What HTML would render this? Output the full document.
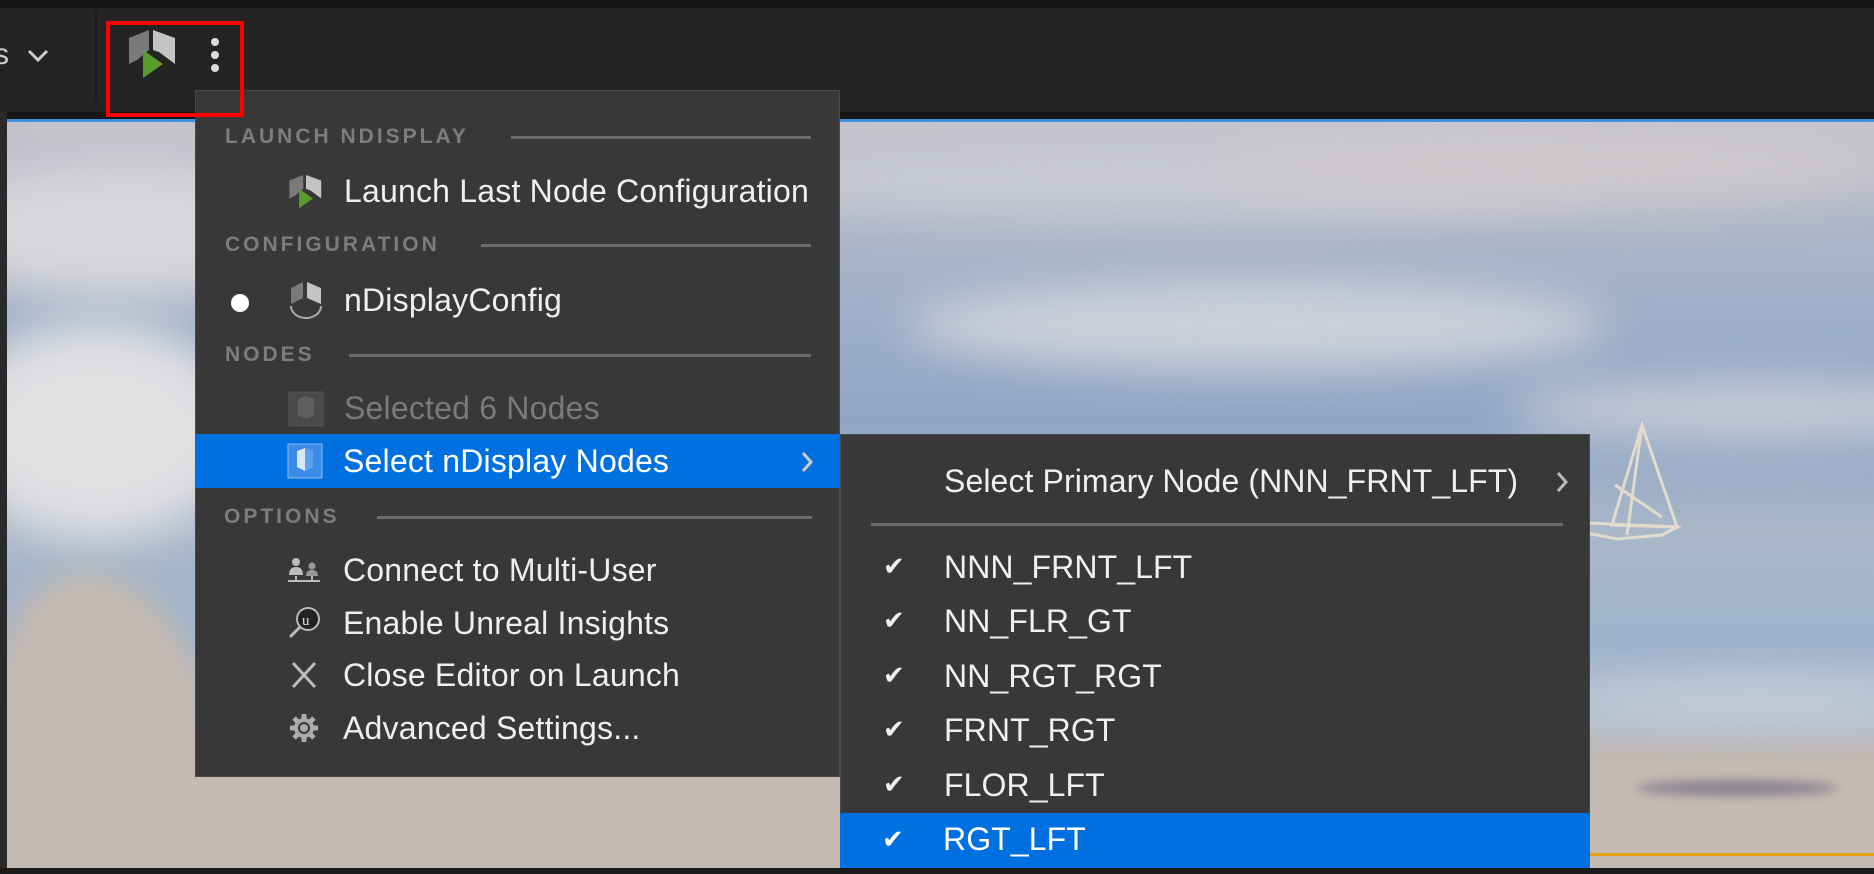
<!DOCTYPE html>
<html><head><meta charset="utf-8"><style>
*{margin:0;padding:0;box-sizing:border-box}
html,body{width:1874px;height:874px;overflow:hidden}
body{position:relative;background:#242424;font-family:"Liberation Sans",sans-serif}
.abs{position:absolute}
#top{left:0;top:0;width:1874px;height:8px;background:#151515}
#bar{left:0;top:8px;width:1874px;height:104px;background:#242424}
#strip{left:0;top:112px;width:1874px;height:8px;background:#161616}
#vp{left:7px;top:120px;width:1867px;height:748px;overflow:hidden;
background:linear-gradient(180deg,#c6c4ca 0%,#b3b8c8 10%,#9fb0c8 25%,#8ea6c4 40%,#a9b7c9 55%,#9db3cb 70%,#b0bccb 80%,#c0b8b2 85%,#c3b7ae 100%)}
#vp .cl{position:absolute;border-radius:50%;filter:blur(22px)}
#blueline{left:7px;top:119px;width:1867px;height:3px;background:#3d8fe0}
#bottom{left:0;top:868px;width:1874px;height:6px;background:#1a1a1a}
#leftstrip{left:0;top:112px;width:7px;height:762px;background:#2a2a2a}
.menu{background:#383838;border:1px solid #4a4a4a}
.hdr{position:absolute;left:29px;font-size:21px;letter-spacing:3px;color:#7d7d7d;font-weight:bold;line-height:24px}
.hline{position:absolute;height:3px;background:#6a6a6a}
.it{position:absolute;left:148px;font-size:32px;color:#efefef;line-height:36px;letter-spacing:0.2px;white-space:nowrap}
.hl{position:absolute;background:#0070e0}
.ic{position:absolute}
.sit{position:absolute;left:103px;font-size:32px;color:#f0f0f0;line-height:36px;white-space:nowrap;letter-spacing:0.1px}
.chk{position:absolute;left:42px;font-size:26px;color:#eee}
</style></head><body>
<div id="top" class="abs"></div>
<div id="bar" class="abs"></div>
<div id="strip" class="abs"></div>
<div id="vp" class="abs">
 <div class="cl" style="left:-80px;top:40px;width:400px;height:140px;background:#d8d6da"></div>
 <div class="cl" style="left:-60px;top:200px;width:300px;height:220px;background:#e0dfe2"></div>
 <div class="cl" style="left:700px;top:20px;width:900px;height:80px;background:#c8c9d3"></div>
 <div class="cl" style="left:900px;top:160px;width:700px;height:90px;background:#cdd0da"></div>
 <div class="cl" style="left:1200px;top:0px;width:700px;height:90px;background:#ccc8cc"></div>
 <div class="cl" style="left:1500px;top:260px;width:500px;height:60px;background:#c7cbd6"></div>
 <div class="cl" style="left:1550px;top:560px;width:400px;height:40px;background:#c9d1dc"></div>
 <div style="position:absolute;left:-20px;top:450px;width:240px;height:400px;background:#c3b9b2;border-radius:40% 60% 0 0;filter:blur(14px)"></div>
 <div style="position:absolute;left:0;top:640px;width:1900px;height:140px;background:#c4bab2;filter:blur(3px)"></div>
 <div style="position:absolute;left:1630px;top:660px;width:200px;height:16px;background:#8a8590;border-radius:50%;filter:blur(5px)"></div>
 <div style="position:absolute;left:1583px;top:733px;width:300px;height:3px;background:#e8a010"></div>
 <svg style="position:absolute;left:1580px;top:285px" width="130" height="160" viewBox="0 0 130 160"><g stroke="#e2dccd" stroke-width="3" fill="none"><path d="M55 20 L25 120 L90 122 Z"/><path d="M55 20 L40 130"/><path d="M0 118 L90 122 L75 130 L30 134 L0 128"/><path d="M28 80 L75 112"/></g></svg>
</div>
<div id="blueline" class="abs"></div>
<div id="leftstrip" class="abs"></div>
<div id="bottom" class="abs"></div>

<!-- toolbar -->
<div class="abs" style="left:-6px;top:38px;font-size:30px;color:#ccc">s</div>
<svg class="abs" style="left:26px;top:48px" width="24" height="16"><path d="M3 3 L12 12 L21 3" stroke="#ccc" stroke-width="3" fill="none"/></svg>
<div class="abs" style="left:95px;top:10px;width:2px;height:92px;background:#1a1a1a"></div>
<svg class="abs" style="left:127px;top:30px" width="52" height="52" viewBox="0 0 52 52"><path d="M2 8 L22 0 L22 20 L10 30 L2 34 Z" fill="#7a7a7a"/><path d="M26 0 L48 8 L48 34 L32 22 L26 20 Z" fill="#c4c4c4"/><path d="M16 20 L36 34 L16 48 Z" fill="#5a9c2c"/></svg>
<div class="abs" style="left:211px;top:38px;width:8px;height:8px;border-radius:50%;background:#ddd"></div>
<div class="abs" style="left:211px;top:51px;width:8px;height:8px;border-radius:50%;background:#ddd"></div>
<div class="abs" style="left:211px;top:64px;width:8px;height:8px;border-radius:50%;background:#ddd"></div>

<!-- main menu -->
<div class="abs menu" style="left:195px;top:90px;width:645px;height:687px">
 <div class="hdr" style="top:34px">LAUNCH NDISPLAY</div><div class="hline" style="left:315px;right:28px;top:45px"></div>
 <svg class="ic" style="left:92px;top:84px" width="36" height="36" viewBox="0 0 52 52"><path d="M2 8 L22 0 L22 20 L10 30 L2 34 Z" fill="#7a7a7a"/><path d="M26 0 L48 8 L48 34 L32 22 L26 20 Z" fill="#c4c4c4"/><path d="M16 20 L36 34 L16 48 Z" fill="#5a9c2c"/></svg>
 <div class="it" style="top:82px">Launch Last Node Configuration</div>
 <div class="hdr" style="top:142px">CONFIGURATION</div><div class="hline" style="left:285px;right:28px;top:153px"></div>
 <div class="ic" style="left:35px;top:203px;width:18px;height:18px;border-radius:50%;background:#fff"></div>
 <svg class="ic" style="left:92px;top:191px" width="36" height="38" viewBox="0 0 36 38"><path d="M3 6 L15 0 L15 16 L3 22 Z" fill="#7a7a7a"/><path d="M19 0 L33 6 L33 22 L19 16 Z" fill="#c4c4c4"/><path d="M3 24 A15 12 0 0 0 33 24" stroke="#aaa" stroke-width="2" fill="none"/></svg>
 <div class="it" style="top:191px">nDisplayConfig</div>
 <div class="hdr" style="top:252px">NODES</div><div class="hline" style="left:153px;right:28px;top:263px"></div>
 <svg class="ic" style="left:92px;top:300px" width="36" height="36"><rect x="1" y="1" width="34" height="34" fill="#4a4a4a" stroke="#555"/><path d="M10 8 L18 5 L26 8 L26 24 L18 28 L10 24 Z" fill="#606060"/></svg>
 <div class="it" style="top:299px;color:#7a7a7a">Selected 6 Nodes</div>
</div>
<div class="abs hl" style="left:195px;top:434px;width:645px;height:54px"></div>
<svg class="abs" style="left:287px;top:443px" width="36" height="36"><rect x="1" y="1" width="34" height="34" fill="#3a8ce8" stroke="#8ab8f0"/><path d="M10 8 L18 5 L26 8 L26 24 L18 28 L10 24 Z" fill="#d8e8fa"/><path d="M18 5 L26 8 L26 24 L18 28 Z" fill="#5aa0ee"/></svg>
<div class="abs it" style="left:343px;top:443px;color:#fff">Select nDisplay Nodes</div>
<svg class="abs" style="left:799px;top:450px" width="16" height="24"><path d="M4 3 L12 12 L4 21" stroke="#ccc" stroke-width="3" fill="none"/></svg>
<div class="abs" style="left:195px;top:488px;width:645px;height:40px">
 <div class="hdr" style="top:17px">OPTIONS</div><div class="hline" style="left:182px;right:28px;top:28px"></div>
</div>
<svg class="abs" style="left:287px;top:557px" width="34" height="30"><circle cx="9" cy="5" r="4" fill="#bbb"/><path d="M2 18 Q2 10 9 10 Q16 10 16 18 Z" fill="#bbb"/><circle cx="25" cy="9" r="3.5" fill="#999"/><path d="M19 19 Q19 13 25 13 Q31 13 31 19 Z" fill="#999"/><path d="M1 24 H33 M9 19 V24 M25 19 V24" stroke="#bbb" stroke-width="2"/></svg>
<div class="abs it" style="left:343px;top:552px">Connect to Multi-User</div>
<svg class="abs" style="left:287px;top:606px" width="34" height="34"><circle cx="21" cy="13" r="11" fill="#222" stroke="#bbb" stroke-width="2"/><text x="15" y="19" font-size="15" fill="#ddd" font-family="Liberation Serif">u</text><path d="M13 21 L3 31" stroke="#bbb" stroke-width="3"/></svg>
<div class="abs it" style="left:343px;top:605px">Enable Unreal Insights</div>
<svg class="abs" style="left:290px;top:660px" width="28" height="30"><path d="M3 3 L25 27 M25 3 L3 27" stroke="#bbb" stroke-width="3"/></svg>
<div class="abs it" style="left:343px;top:657px">Close Editor on Launch</div>
<svg class="abs" style="left:288px;top:712px" width="32" height="32" viewBox="0 0 32 32"><g fill="#aaa"><circle cx="16" cy="16" r="10"/><g stroke="#aaa" stroke-width="5"><path d="M16 2 V30 M2 16 H30 M6 6 L26 26 M26 6 L6 26"/></g></g><circle cx="16" cy="16" r="6" fill="#383838"/><circle cx="16" cy="16" r="4" fill="#aaa"/></svg>
<div class="abs it" style="left:343px;top:710px">Advanced Settings...</div>

<!-- submenu -->
<div class="abs menu" style="left:840px;top:434px;width:750px;height:434px;border-bottom:none">
 <div class="sit" style="top:28px">Select Primary Node (NNN_FRNT_LFT)</div>
 <svg style="position:absolute;left:713px;top:35px" width="16" height="24"><path d="M4 3 L12 12 L4 21" stroke="#bbb" stroke-width="3" fill="none"/></svg>
 <div style="position:absolute;left:30px;top:88px;width:692px;height:3px;background:#6a6a6a"></div>
 <div class="chk" style="top:116px">✔</div><div class="sit" style="top:114px">NNN_FRNT_LFT</div>
 <div class="chk" style="top:170px">✔</div><div class="sit" style="top:168px">NN_FLR_GT</div>
 <div class="chk" style="top:225px">✔</div><div class="sit" style="top:223px">NN_RGT_RGT</div>
 <div class="chk" style="top:279px">✔</div><div class="sit" style="top:277px">FRNT_RGT</div>
 <div class="chk" style="top:334px">✔</div><div class="sit" style="top:332px">FLOR_LFT</div>
</div>
<div class="abs hl" style="left:840px;top:813px;width:750px;height:55px"></div>
<div class="abs chk" style="left:882px;top:824px;color:#fff">✔</div>
<div class="abs sit" style="left:943px;top:821px;color:#fff">RGT_LFT</div>

<!-- red box -->
<div class="abs" style="left:106px;top:21px;width:138px;height:96px;border:4px solid #f00"></div>
</body></html>
